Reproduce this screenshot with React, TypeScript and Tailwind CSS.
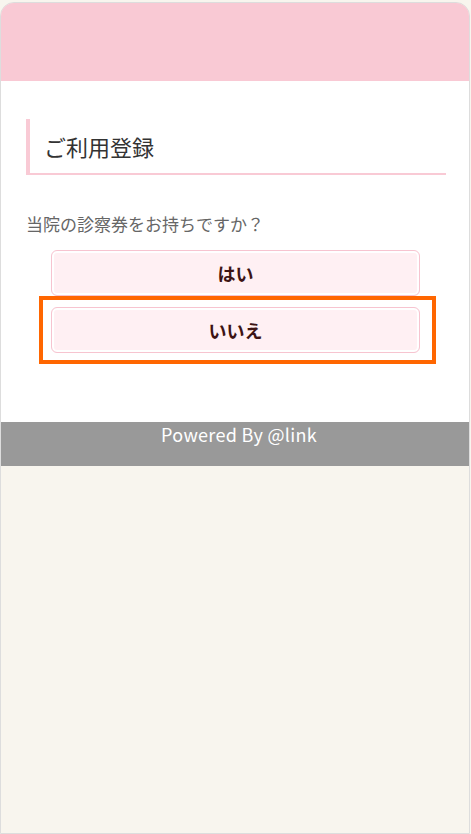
export default function App() {
  const jp = { fontFamily: '"Noto Sans CJK JP", "Noto Sans", sans-serif' };
  return (
    <div className="min-h-[834px] bg-[#f8f5ee] pt-[2px]" style={jp}>
      <div className="min-h-[832px] border border-[#dddddd] rounded-t-[14px] overflow-hidden flex flex-col mr-[1px]">
        {/* header band */}
        <div className="h-[78px] bg-[#f9c9d4]" />

        <div className="bg-white pl-[25px] pr-[23px] pt-[38px] pb-[58px]">
          <div className="h-[56px] border-l-4 border-b-2 border-[#f9cad5] flex items-center pl-[14px]">
            <h1 className="text-[22px] text-[#333333] font-normal leading-none">ご利用登録</h1>
          </div>

          <p className="mt-[37px] text-[17px] leading-[24px] text-[#666666]">当院の診察券をお持ちですか？</p>

          <div className="mt-[14px] flex flex-col">
            <button className="ml-[25px] mr-[26px] h-[46px] rounded-[6px] border border-[#f7c4d0] bg-[#fff0f3] shadow-[inset_0_0_0_2px_#ffffff] text-[18px] font-bold text-[#3d1414]">
              はい
            </button>
            <div className="ml-[13px] mr-[10px] border-4 border-[#ff6600] pl-[8px] pr-[12px] py-[7px]">
              <button className="w-full h-[46px] rounded-[6px] border border-[#f7c4d0] bg-[#fff0f3] shadow-[inset_0_0_0_2px_#ffffff] text-[18px] font-bold text-[#3d1414]">
                いいえ
              </button>
            </div>
          </div>
        </div>

        <div className="h-[44px] bg-[#999999] text-center text-white text-[18px] leading-[24px] tracking-[0.3px] pl-[8px]">
          Powered By @link
        </div>

        <div className="flex-1 bg-[#f8f5ee]" />
      </div>
    </div>
  );
}
